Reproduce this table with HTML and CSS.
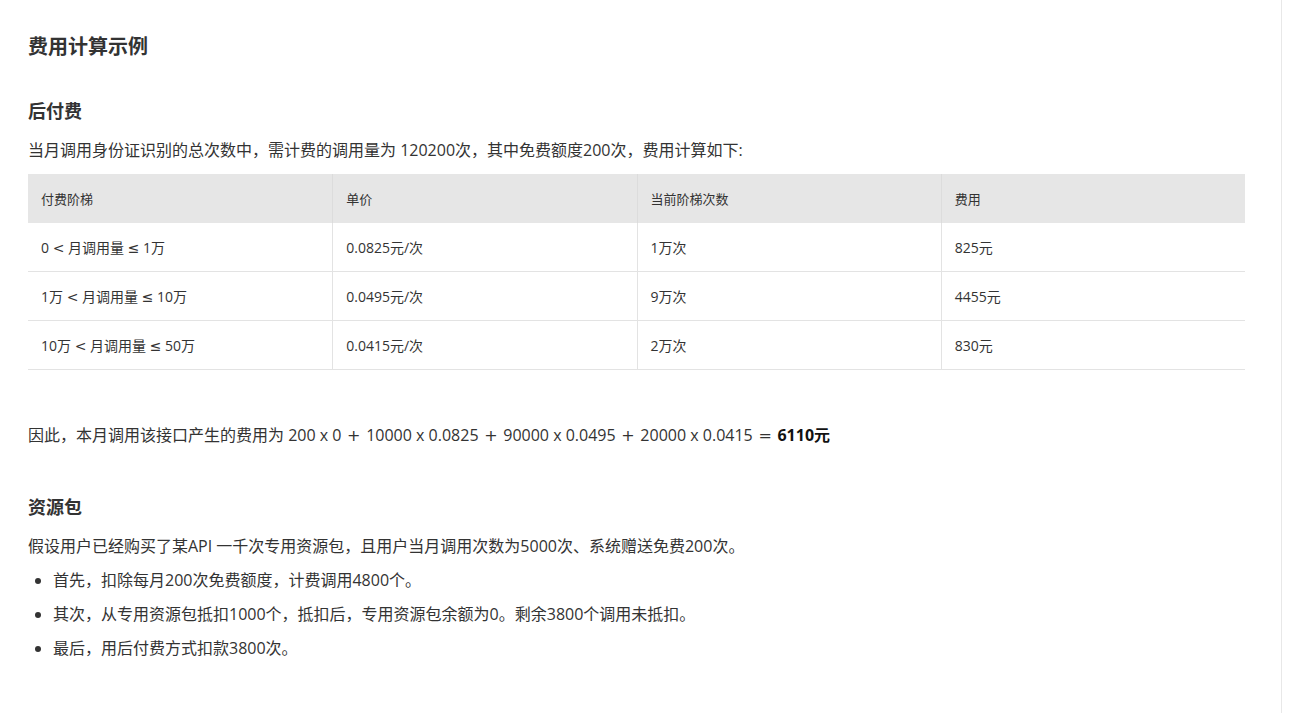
FILE: index.html
```html
<!DOCTYPE html>
<html lang="zh-CN">
<head>
<meta charset="utf-8">
<title>费用计算示例</title>
<link rel="stylesheet" href="styles.css">
</head>
<body>
<main class="doc">
  <h2 class="title">费用计算示例</h2>

  <h3 class="sub">后付费</h3>
  <p class="para">当月调用身份证识别的总次数中，需计费的调用量为 120200次，其中免费额度200次，费用计算如下:</p>

  <table class="price">
    <thead>
      <tr><th>付费阶梯</th><th>单价</th><th>当前阶梯次数</th><th>费用</th></tr>
    </thead>
    <tbody>
      <tr><td>0 <span class="op">&lt;</span> 月调用量 <span class="op">≤</span> 1万</td><td>0.0825元/次</td><td>1万次</td><td>825元</td></tr>
      <tr><td>1万 <span class="op">&lt;</span> 月调用量 <span class="op">≤</span> 10万</td><td>0.0495元/次</td><td>9万次</td><td>4455元</td></tr>
      <tr><td>10万 <span class="op">&lt;</span> 月调用量 <span class="op">≤</span> 50万</td><td>0.0415元/次</td><td>2万次</td><td>830元</td></tr>
    </tbody>
  </table>

  <p class="para formula">因此，本月调用该接口产生的费用为 200 x 0 <span class="op">+</span> 10000 x 0.0825 <span class="op">+</span> 90000 x 0.0495 <span class="op">+</span> 20000 x 0.0415 <span class="op">=</span> <strong>6110元</strong></p>

  <h3 class="sub sub-pack">资源包</h3>
  <p class="para">假设用户已经购买了某API 一千次专用资源包，且用户当月调用次数为5000次、系统赠送免费200次。</p>
  <ul class="steps">
    <li>首先，扣除每月200次免费额度，计费调用4800个。</li>
    <li>其次，从专用资源包抵扣1000个，抵扣后，专用资源包余额为0。剩余3800个调用未抵扣。</li>
    <li>最后，用后付费方式扣款3800次。</li>
  </ul>
</main>
</body>
</html>
```

FILE: styles.css
```css
html, body {
  margin: 0;
  padding: 0;
  background: #fff;
}

body {
  font-family: "Open Sans", "Noto Sans CJK SC", sans-serif;
  color: #333;
}

.doc {
  box-sizing: border-box;
  width: 1282px;
  min-height: 713px;
  padding: 33px 36px 0 28px;
  border-right: 1px solid #e8e8e8;
}

.title {
  margin: 0;
  font-size: 20px;
  line-height: 28px;
  font-weight: 700;
  color: #333;
}

.sub {
  margin: 37px 0 0;
  font-size: 18px;
  line-height: 26px;
  font-weight: 700;
  color: #333;
}

.sub-pack {
  margin-top: 46px;
}

.para {
  margin: 14px 0 0;
  font-size: 16px;
  line-height: 24px;
}

.op {
  font-family: "DejaVu Sans", sans-serif;
}

.formula .op {
  margin: 0 1.5px;
}

.price {
  width: 100%;
  margin-top: 12px;
  border-collapse: separate;
  border-spacing: 0;
  table-layout: fixed;
  font-size: 14px;
  color: #333;
}

.price th,
.price td {
  box-sizing: border-box;
  padding: 0 13px;
  text-align: left;
  font-weight: 400;
  border-left: 1px solid #e3e3e3;
}

.price td {
  height: 49px;
  border-bottom: 1px solid #e3e3e3;
}

.price th:first-child,
.price td:first-child {
  border-left: none;
}

.price th {
  height: 49px;
  background: #e6e6e6;
  font-size: 13px;
  border-left-color: #dcdcdc;
}

.formula {
  margin-top: 53px;
}

.formula strong {
  font-weight: 700;
  color: #111;
}

.steps {
  margin: 10px 0 0;
  padding-left: 25px;
  font-size: 16px;
  line-height: 24px;
}

.steps li {
  margin-bottom: 10px;
}
```
